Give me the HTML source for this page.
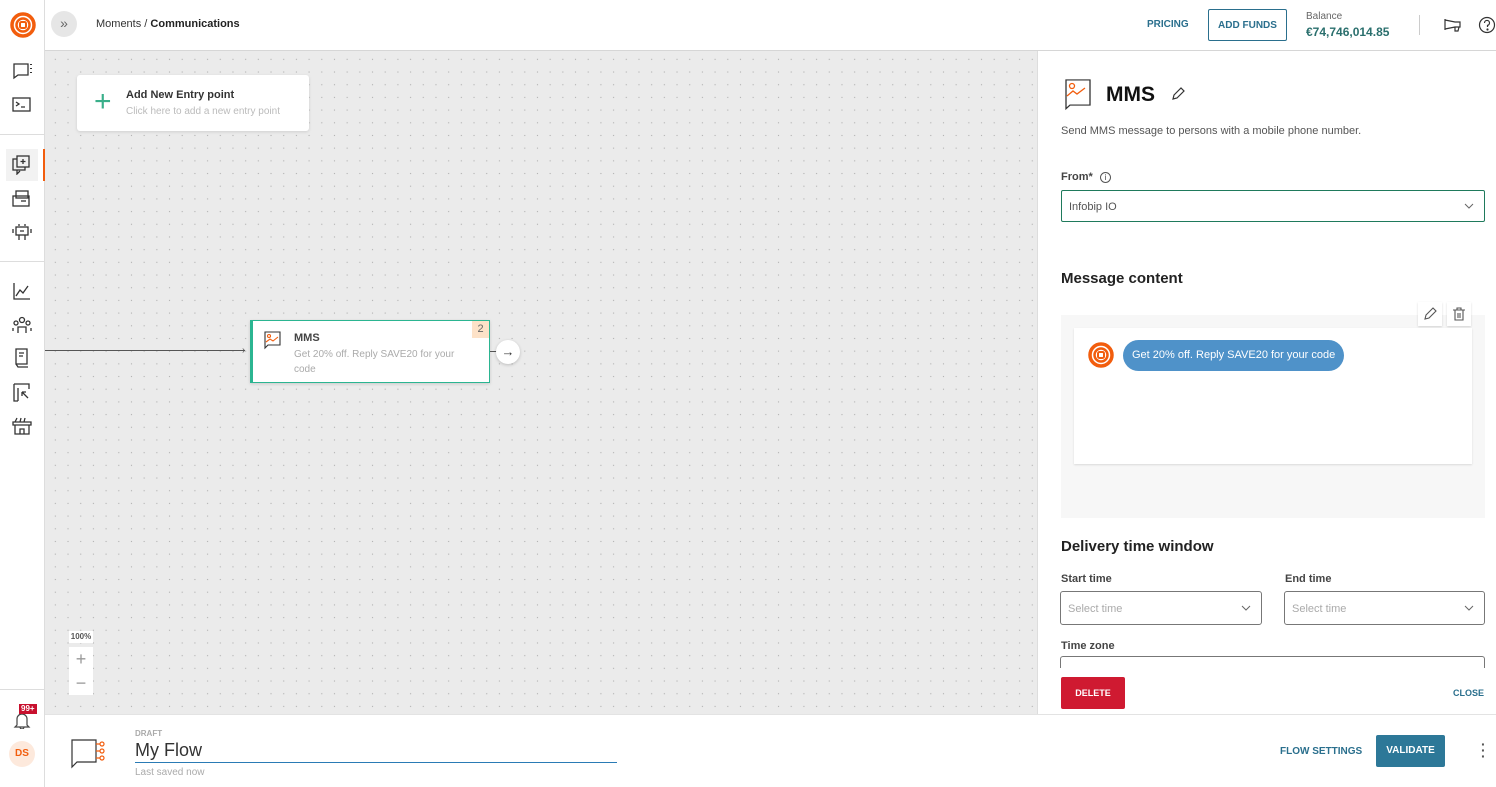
<!DOCTYPE html>
<html><head><meta charset="utf-8"><style>
*{box-sizing:border-box;margin:0;padding:0}
body{width:1496px;height:787px;overflow:hidden;font-family:"Liberation Sans",sans-serif;background:#fff;position:relative;color:#222}
.abs{position:absolute}
.side{left:0;top:0;width:45px;height:787px;border-right:1px solid #ddd;background:#fff}
.hdr{left:45px;top:0;width:1451px;height:51px;border-bottom:1px solid #d6d6d6;background:#fff}
.canvas{left:45px;top:51px;width:992px;height:663px;background-color:#ebebeb;background-image:radial-gradient(circle,#b0b0b0 0.6px,transparent 0.8px);background-size:12.7px 12.7px;background-position:4px 2px}
.panel{left:1037px;top:51px;width:459px;height:663px;background:#fff;border-left:1px solid #ddd}
.bottom{left:45px;top:714px;width:1451px;height:73px;background:#fff;border-top:1px solid #e3e3e3}
.ic{position:absolute;left:12px}
.lbl{font-size:11px;font-weight:bold;color:#444}
.sel{position:absolute;border:1px solid #777;border-radius:3px;height:34px;font-size:11px;color:#aaa;padding:11px 7px}
.chev{position:absolute;right:10px;top:13px}
</style></head><body>

<div class="abs side">
 <svg class="abs" style="left:10px;top:12px" width="26" height="26" viewBox="0 0 26 26"><circle cx="13" cy="13" r="11" fill="none" stroke="#f25d0d" stroke-width="3.5"/><circle cx="13" cy="13" r="6.5" fill="none" stroke="#f25d0d" stroke-width="2.5"/><rect x="10" y="10" width="6" height="6" rx="1.5" fill="none" stroke="#f25d0d" stroke-width="2"/></svg>
 <svg class="ic" style="top:62px" width="22" height="18" viewBox="0 0 22 18" fill="none" stroke="#333" stroke-width="1.3"><path d="M2 2h14v11H6l-4 3z"/><path d="M19 2v1M19 6v1M19 10v1" stroke-width="2"/></svg>
 <svg class="ic" style="top:97px" width="20" height="16" fill="none" stroke="#333" stroke-width="1.3"><rect x="1" y="1" width="17" height="13"/><path d="M4 5l3 2-3 2M9 10h4"/></svg>
 <div class="abs" style="left:0;top:134px;width:44px;border-top:1px solid #ddd"></div>
 <div class="abs" style="left:6px;top:149px;width:32px;height:32px;background:#f2f2f2"></div>
 <div class="abs" style="left:43px;top:149px;width:2px;height:32px;background:#f25d0d"></div>
 <svg class="ic" style="top:155px" width="20" height="20" fill="none" stroke="#333" stroke-width="1.3"><rect x="1" y="4" width="12" height="11"/><rect x="5" y="1" width="12" height="11" fill="#f2f2f2"/><path d="M11 4v5M8.5 6.5h5M5 15v4l3-3"/></svg>
 <svg class="ic" style="top:190px" width="20" height="18" fill="none" stroke="#333" stroke-width="1.3"><rect x="4" y="1" width="12" height="7"/><rect x="1" y="6" width="16" height="10"/><path d="M9 11h5"/></svg>
 <svg class="ic" style="top:223px" width="20" height="18" fill="none" stroke="#333" stroke-width="1.3"><rect x="4" y="4" width="12" height="8"/><path d="M7 1v2M13 1v2M1 6v4M19 6v4M7 12v5M13 12v5M8 8h4"/></svg>
 <div class="abs" style="left:0;top:261px;width:44px;border-top:1px solid #ddd"></div>
 <svg class="ic" style="top:282px" width="20" height="18" fill="none" stroke="#333" stroke-width="1.3"><path d="M2 1v16h16M4 14l4-6 3 3 5-7"/></svg>
 <svg class="ic" style="top:316px" width="20" height="18" fill="none" stroke="#333" stroke-width="1.3"><circle cx="10" cy="4" r="2.5"/><circle cx="4" cy="7" r="2"/><circle cx="16" cy="7" r="2"/><path d="M6 17v-6h8v6M1 15v-3M19 15v-3"/></svg>
 <svg class="ic" style="top:348px" width="20" height="20" fill="none" stroke="#333" stroke-width="1.3"><path d="M4 1h11v15H4zM4 16l2 3h10M7 5h5M7 8h4"/></svg>
 <svg class="ic" style="top:383px" width="20" height="20" fill="none" stroke="#333" stroke-width="1.3"><path d="M2 1v17h4M2 1h15v5M6 5v13M10 9l6 6M10 9v4M10 9h4"/></svg>
 <svg class="ic" style="top:417px" width="20" height="18" fill="none" stroke="#333" stroke-width="1.3"><path d="M1 5h18v3H1zM3 8v9h14V8M8 17v-5h4v5M5 1l-2 4M9 1l-1 4M13 1l-1 4"/></svg>
 <div class="abs" style="left:0;top:689px;width:44px;border-top:1px solid #ddd"></div>
 <svg class="abs" style="left:13px;top:711px" width="18" height="18" fill="none" stroke="#444" stroke-width="1.2"><path d="M4 14V8a5 5 0 0 1 10 0v6l2 2H2zM7 16a2 2 0 0 0 4 0"/></svg>
 <div class="abs" style="left:19px;top:704px;background:#c8102e;color:#fff;font-size:8px;font-weight:bold;padding:0 2px;line-height:10px">99+</div>
 <div class="abs" style="left:9px;top:741px;width:26px;height:26px;border-radius:50%;background:#fde9dc;color:#f25d0d;font-size:10px;font-weight:bold;text-align:center;line-height:26px">DS</div>
</div>

<div class="abs hdr">
 <div class="abs" style="left:6px;top:11px;width:26px;height:26px;border-radius:50%;background:#e6e6e6;color:#666;text-align:center;line-height:25px;font-size:14px">»</div>
 <div class="abs" style="left:51px;top:18px;font-size:11px;color:#333">Moments / <b style="color:#222">Communications</b></div>
 <div class="abs" style="left:1102px;top:19px;font-size:10px;font-weight:bold;color:#2a6f8d">PRICING</div>
 <div class="abs" style="left:1163px;top:9px;width:79px;height:32px;border:1px solid #2a6f8d;border-radius:2px;font-size:10px;font-weight:bold;color:#2a6f8d;text-align:center;line-height:31px">ADD FUNDS</div>
 <div class="abs" style="left:1261px;top:11px;font-size:10px;color:#666">Balance</div>
 <div class="abs" style="left:1261px;top:25px;font-size:12px;font-weight:bold;color:#2a6f6d">€74,746,014.85</div>
 <div class="abs" style="left:1374px;top:15px;height:20px;border-left:1px solid #ccc"></div>
 <svg class="abs" style="left:1399px;top:17px" width="20" height="16" fill="none" stroke="#333" stroke-width="1.2"><path d="M1 2v11M1 3l10 2h5v5h-5L1 12M11 10v4h3l1-4"/></svg>
 <svg class="abs" style="left:1433px;top:16px" width="18" height="18" fill="none" stroke="#333" stroke-width="1.2"><circle cx="9" cy="9" r="7.5"/><path d="M6.5 7a2.5 2.5 0 1 1 3 2.4V11"/><circle cx="9.5" cy="13.5" r="0.5" fill="#333"/></svg>
</div>

<div class="abs canvas">
 <div class="abs" style="left:32px;top:24px;width:232px;height:56px;background:#fff;border-radius:3px;box-shadow:0 1px 3px rgba(0,0,0,.12)">
  <div class="abs" style="left:17px;top:14px;color:#3aaf8a;font-size:30px;line-height:26px;font-weight:200">+</div>
  <div class="abs" style="left:49px;top:14px;font-size:11px;font-weight:bold;color:#333">Add New Entry point</div>
  <div class="abs" style="left:49px;top:31px;font-size:10px;color:#bbb">Click here to add a new entry point</div>
 </div>
 <div class="abs" style="left:0;top:299px;width:200px;border-top:1px solid #555"></div>
 <div class="abs" style="left:197px;top:295px;font-size:10px;color:#555;line-height:9px">›</div>
 <div class="abs" style="left:205px;top:269px;width:240px;height:63px;background:#fff;border-left:3px solid #2bb591;border-top:1px solid #2bb591;border-right:1px solid #2bb591;border-bottom:1px solid #2bb591;box-shadow:0 1px 3px rgba(0,0,0,.15)">
  <svg class="abs" style="left:11px;top:10px" width="18" height="20" fill="none" stroke-width="1.1"><path d="M1 1h15v13H4l-3 3z" stroke="#333"/><circle cx="5" cy="5" r="1.5" stroke="#f25d0d"/><path d="M2 11l4-3 3 2 5-4" stroke="#f25d0d"/></svg>
  <div class="abs" style="left:41px;top:11px;font-size:11px;font-weight:bold;color:#444">MMS</div>
  <div class="abs" style="left:41px;top:26px;width:175px;font-size:10px;color:#aaa;line-height:15px">Get 20% off. Reply SAVE20 for your code</div>
  <div class="abs" style="right:0;top:0;width:17px;height:17px;background:#fde2c8;font-size:11px;color:#666;text-align:center;line-height:17px">2</div>
 </div>
 <div class="abs" style="left:445px;top:300px;width:8px;border-top:1px solid #555"></div>
 <div class="abs" style="left:451px;top:289px;width:24px;height:24px;border-radius:50%;background:#fff;box-shadow:0 1px 3px rgba(0,0,0,.2);text-align:center;line-height:23px;font-size:13px;color:#333">→</div>
 <div class="abs" style="left:24px;top:580px;width:24px;height:12px;background:#fff;font-size:8px;font-weight:bold;color:#555;text-align:center;line-height:12px">100%</div>
 <div class="abs" style="left:24px;top:596px;width:24px;height:48px;background:#fff;text-align:center;color:#999;font-size:18px;line-height:24px">+<br>−</div>
</div>

<div class="abs panel">
 <svg class="abs" style="left:27px;top:28px" width="26" height="32" fill="none" stroke-width="1.3"><path d="M1 1h24v28H5l-4 4z" stroke="#333" transform="scale(1,0.9)"/><circle cx="7" cy="7" r="2.5" stroke="#f25d0d"/><path d="M2 17l6-5 4 3 8-6" stroke="#f25d0d"/></svg>
 <div class="abs" style="left:68px;top:32px;font-size:21px;font-weight:bold;color:#111">MMS</div>
 <svg class="abs" style="left:133px;top:36px" width="14" height="14" fill="none" stroke="#333" stroke-width="1.2"><path d="M2 12l1-4 7-7 3 3-7 7z"/></svg>
 <div class="abs" style="left:23px;top:74px;font-size:11px;color:#555">Send MMS message to persons with a mobile phone number.</div>
 <div class="abs lbl" style="left:23px;top:120px">From* <span style="display:inline-block;width:11px;height:11px;border:1px solid #555;border-radius:50%;font-size:8px;text-align:center;line-height:9px;font-weight:normal;margin-left:4px">i</span></div>
 <div class="abs" style="left:23px;top:139px;width:424px;height:32px;border:1px solid #1f7a5c;border-radius:2px;font-size:11px;color:#555;padding:10px 7px">Infobip IO
  <svg class="chev" style="top:12px" width="10" height="6" fill="none" stroke="#666"><path d="M1 1l4 4 4-4"/></svg></div>
 <div class="abs" style="left:23px;top:219px;font-size:15px;font-weight:bold;color:#222">Message content</div>
 <div class="abs" style="left:23px;top:264px;width:424px;height:203px;background:#f7f7f7"></div>
 <div class="abs" style="left:380px;top:251px;width:24px;height:24px;background:#fff;box-shadow:0 1px 2px rgba(0,0,0,.15)"><svg style="margin:5px" width="14" height="14" fill="none" stroke="#555" stroke-width="1.1"><path d="M2 12l1-4 7-7 3 3-7 7z"/></svg></div>
 <div class="abs" style="left:409px;top:251px;width:24px;height:24px;background:#fff;box-shadow:0 1px 2px rgba(0,0,0,.15)"><svg style="margin:5px" width="14" height="14" fill="none" stroke="#555" stroke-width="1.1"><path d="M1 3h12M5 3V1h4v2M3 3v10h8V3M6 6v5M8 6v5"/></svg></div>
 <div class="abs" style="left:36px;top:277px;width:398px;height:136px;background:#fff;box-shadow:0 1px 2px rgba(0,0,0,.12)">
  <svg class="abs" style="left:14px;top:14px" width="26" height="26" viewBox="0 0 26 26"><circle cx="13" cy="13" r="11" fill="none" stroke="#f25d0d" stroke-width="3.5"/><circle cx="13" cy="13" r="6.5" fill="none" stroke="#f25d0d" stroke-width="2.5"/><rect x="10" y="10" width="6" height="6" rx="1.5" fill="none" stroke="#f25d0d" stroke-width="2"/></svg>
  <div class="abs" style="left:49px;top:12px;height:31px;padding:0 9px;border-radius:16px;background:#4f92c9;color:#fff;font-size:11px;line-height:31px">Get 20% off. Reply SAVE20 for your code</div>
 </div>
 <div class="abs" style="left:23px;top:487px;font-size:15px;font-weight:bold;color:#222">Delivery time window</div>
 <div class="abs lbl" style="left:23px;top:522px">Start time</div>
 <div class="abs lbl" style="left:247px;top:522px">End time</div>
 <div class="sel" style="left:22px;top:540px;width:202px">Select time<svg class="chev" width="10" height="6" fill="none" stroke="#666"><path d="M1 1l4 4 4-4"/></svg></div>
 <div class="sel" style="left:246px;top:540px;width:201px">Select time<svg class="chev" width="10" height="6" fill="none" stroke="#666"><path d="M1 1l4 4 4-4"/></svg></div>
 <div class="abs lbl" style="left:23px;top:589px">Time zone</div>
 <div class="abs" style="left:22px;top:605px;width:425px;height:12px;border:1px solid #777;border-bottom:none;border-radius:3px 3px 0 0"></div>
 <div class="abs" style="left:0;top:617px;width:458px;height:46px;background:#fff"></div>
 <div class="abs" style="left:23px;top:626px;width:64px;height:32px;background:#cf1a31;border-radius:2px;color:#fff;font-size:9px;font-weight:bold;text-align:center;line-height:32px">DELETE</div>
 <div class="abs" style="left:415px;top:637px;font-size:9px;font-weight:bold;color:#2a6f8d">CLOSE</div>
</div>

<div class="abs bottom">
 <svg class="abs" style="left:25px;top:22px" width="40" height="32" fill="none" stroke-width="1.2"><path d="M2 3h24v22H7l-5 5z" stroke="#333"/><path d="M26 7h4M26 14h4M26 21h4" stroke="#f25d0d"/><circle cx="32" cy="7" r="2" stroke="#f25d0d"/><circle cx="32" cy="14" r="2" stroke="#f25d0d"/><circle cx="32" cy="21" r="2" stroke="#f25d0d"/></svg>
 <div class="abs" style="left:90px;top:14px;font-size:8px;font-weight:bold;color:#aaa">DRAFT</div>
 <div class="abs" style="left:90px;top:25px;width:482px;height:23px;border-bottom:1px solid #2a7bb5;font-size:18px;color:#333">My Flow</div>
 <div class="abs" style="left:90px;top:52px;font-size:10px;color:#aaa">Last saved now</div>
 <div class="abs" style="left:1235px;top:31px;font-size:10px;font-weight:bold;color:#2a6f8d">FLOW SETTINGS</div>
 <div class="abs" style="left:1331px;top:20px;width:69px;height:32px;background:#2d7898;border-radius:2px;color:#fff;font-size:10px;font-weight:bold;text-align:center;line-height:32px">VALIDATE</div>
 <div class="abs" style="left:1436px;top:26px;font-size:14px;color:#555;line-height:6px;font-weight:bold">·<br>·<br>·</div>
</div>
</body></html>
